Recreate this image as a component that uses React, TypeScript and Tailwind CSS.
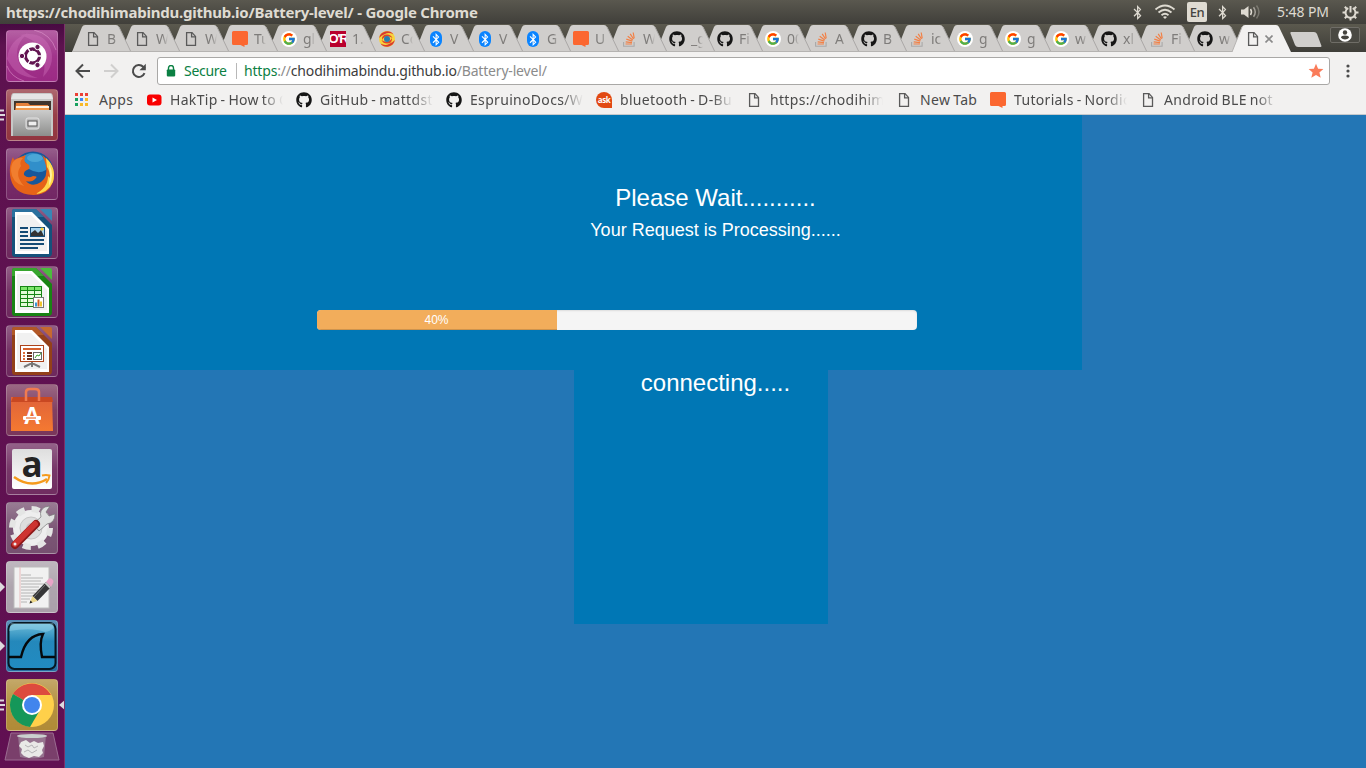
import React from "react";
import { FaGithub, FaBluetoothB } from "react-icons/fa";
import { FcGoogle } from "react-icons/fc";

type IconKind = "doc" | "nordic" | "google" | "oreilly" | "swirl" | "bt" | "so" | "github" | "youtube" | "ask" | "apps";

function SiteIcon({ kind }: { kind: IconKind }) {
  switch (kind) {
    case "doc":
      return (
        <svg width="16" height="16" viewBox="0 0 16 16" fill="none" stroke="#5a5a5a" strokeWidth="1.3">
          <path d="M3.600 1.600h5.400l3.500 3.800v8.900H3.600z" />
          <path d="M8.600 1.800v4h3.800" />
        </svg>
      );
    case "nordic":
      return (
        <svg width="16" height="16" viewBox="0 0 16 16">
          <path d="M1.500 0h13q1.500 0 1.500 1.500v11q0 1.500-1.500 1.500h-2v2L8.500 14h-7Q0 14 0 12.500v-11Q0 0 1.500 0z" fill="#fb6730" />
        </svg>
      );
    case "google":
      return (
        <span className="flex size-4 items-center justify-center rounded-full bg-white">
          <FcGoogle size={14} />
        </span>
      );
    case "oreilly":
      return (
        <span className="flex size-4 items-center justify-center overflow-hidden bg-[#b9002d] font-['Liberation_Sans'] text-[13px] leading-4 font-bold tracking-[-1.2px] whitespace-nowrap text-white">
          O'R
        </span>
      );
    case "swirl":
      return (
        <svg width="16" height="16" viewBox="0 0 16 16">
          <circle cx="8" cy="8" r="8" fill="#f8d43c" />
          <path d="M.2 7A8 8 0 0 1 14.500 3.500Q10 1 6 3 2 4.500 .2 7zM15.800 9A8 8 0 0 1 1.500 12.500Q6 15 10 13q4-1.500 5.800-4z" fill="#d93b30" />
          <path d="M3 9q-.5-5.500 5-5.500Q12 3.500 13.500 7 10 4.500 7 5.500T3 9zM13 7q.5 5.500-5 5.500Q4 12.500 2.500 9 6 11.500 9 10.500T13 7z" fill="#e0452d" />
          <circle cx="8" cy="8" r="3" fill="#297fb3" />
        </svg>
      );
    case "bt":
      return (
        <span className="ml-0.5 flex h-4 w-3 items-center justify-center rounded-[6px] bg-[#0a84ff] text-white">
          <FaBluetoothB size={13} />
        </span>
      );
    case "so":
      return (
        <svg width="16" height="16" viewBox="0 0 16 16" fill="none">
          <path d="M2.600 11v4.200h10.500V11" stroke="#a9a9a9" strokeWidth="1.100" />
          <path d="M4.500 13h6.400M4.700 10.800l6.300.8M5.300 8.100l6 2M6.700 5.300l5 3.700M9.200 2.900l3.300 5.100M12.200 1.500l1 5.800" stroke="#f28046" strokeWidth="1.200" />
        </svg>
      );
    case "github":
      return <FaGithub size={16} color="#161616" />;
    case "youtube":
      return (
        <svg width="16" height="16" viewBox="0 0 16 16">
          <rect x="1" y="2.500" width="14.500" height="11" rx="3" fill="#f90000" />
          <path d="M6.500 5.500v5L11 8z" fill="#fff" />
        </svg>
      );
    case "ask":
      return (
        <span className="flex size-4 items-center justify-center rounded-full rounded-br-none bg-[#e24912] font-['Open_Sans'] text-[8px] leading-none font-bold tracking-[-0.4px] text-white">
          ask
        </span>
      );
    default:
      return (
        <svg width="16" height="16" viewBox="0 0 16 16">
          {["#ec4035", "#ec4035", "#ec4035", "#18a05e", "#4286f5", "#f9b928", "#18a05e", "#f9b928", "#f9b928"].map((c, i) => (
            <rect key={i} x={(i % 3) * 5} y={1 + Math.floor(i / 3) * 5} width="3" height="3" fill={c} />
          ))}
        </svg>
      );
  }
}

const tabs: [IconKind, string][] = [
  ["doc", "B"], ["doc", "W"], ["doc", "W"], ["nordic", "Tu"], ["google", "gl"], ["oreilly", "1."],
  ["swirl", "Co"], ["bt", "V"], ["bt", "V"], ["bt", "G"], ["nordic", "U"], ["so", "W"],
  ["github", "_g"], ["github", "Fi"], ["google", "00"], ["so", "A"], ["github", "B"], ["so", "ic"],
  ["google", "g"], ["google", "g"], ["google", "w"], ["github", "xl"], ["so", "Fi"], ["github", "w"],
];

const bookmarks: { kind: IconKind; label: string; box: string; text: string }[] = [
  { kind: "apps", label: "Apps", box: "w-[71px]", text: "w-[40px]" },
  { kind: "youtube", label: "HakTip - How to C", box: "w-[150px]", text: "w-[113px] fade" },
  { kind: "github", label: "GitHub - mattdst", box: "w-[150px]", text: "w-[113px] fade" },
  { kind: "github", label: "EspruinoDocs/W", box: "w-[150px]", text: "w-[113px] fade" },
  { kind: "ask", label: "bluetooth - D-Bu", box: "w-[150px]", text: "w-[113px] fade" },
  { kind: "doc", label: "https://chodihim", box: "w-[150px]", text: "w-[113px] fade" },
  { kind: "doc", label: "New Tab", box: "w-[94px]", text: "w-[64px]" },
  { kind: "nordic", label: "Tutorials - Nordic", box: "w-[150px]", text: "w-[113px] fade" },
  { kind: "doc", label: "Android BLE not", box: "w-[150px]", text: "w-[113px] fade" },
];

function TopBar() {
  return (
    <header className="flex h-6 shrink-0 items-center justify-between bg-linear-to-b from-[#5a584f] to-[#403f3a] pr-[7px] pl-[6px] text-[#dfdbd2]">
      <h1 className="text-[15px] leading-6 font-bold tracking-[-0.23px] whitespace-pre">
        https://chodihimabindu.github.io/Battery-level/ - Google Chrome
      </h1>
      <div className="flex h-6 items-center">
        <FaBluetoothB size={15} className="mr-[9px]" />
        <svg width="22" height="16" viewBox="0 0 22 16" fill="none" stroke="currentColor" strokeWidth="1.800" className="mr-[11px]">
          <path d="M1.500 5.500Q11-2.500 20.500 5.500M4.500 8.500q6.500-5.600 13 0M7.500 11.300q3.500-3 7 0" />
          <path d="M9 13q2-1.600 4 0l-2 2z" fill="currentColor" stroke="none" />
        </svg>
        <span className="flex h-5 w-5 items-center justify-center rounded-[2px] bg-[#dfdbd2] text-[13px] leading-none font-medium tracking-[-0.5px] text-[#45443f]">En</span>
        <FaBluetoothB size={15} className="mr-[10px] ml-2" />
        <svg width="22" height="16" viewBox="0 0 22 16" fill="none" stroke="currentColor" strokeWidth="1.500">
          <path d="M1 5.500h3L8.500 2v12L4 10.500H1z" fill="currentColor" stroke="none" />
          <path d="M10.500 5q2 3 0 6" />
          <path d="M13.500 3.200q3.500 4.800 0 9.600" opacity=".6" />
          <path d="M16.500 1.500q5 6.500 0 13" opacity=".3" />
        </svg>
        <span className="ml-[15px] w-[53px] text-[14px] leading-6 tracking-[-0.1px] whitespace-nowrap">5:48 PM</span>
        <svg width="17" height="17" viewBox="0 0 17 17" fill="none" stroke="currentColor" className="ml-[12px]">
          <path d="M6.300 4.200a5 5 0 1 0 4.400 0" strokeWidth="2" />
          <path d="M8.500 2v6.500" strokeWidth="2" />
          <path d="M.5 8.500h3M13.500 8.500h3M8.500 13.500v3M2.800 2.800l2 2M14.200 2.800l-2 2M2.800 14.200l2-2M14.200 14.200l-2-2" strokeWidth="2" />
        </svg>
      </div>
    </header>
  );
}

function TabStrip() {
  return (
    <div className="flex h-7 shrink-0 bg-linear-to-b from-[#5b594e] to-[#3f3e39] pl-[7px]">
      {tabs.map(([kind, label], i) => (
        <div key={i} className={`relative flex h-7 shrink-0 items-center pt-[2px] pl-[13px] ${i < 8 ? "w-[49px]" : "w-12"}`} style={{ zIndex: 24 - i }}>
          <svg width="61" height="28" viewBox="0 0 61 28" className="absolute top-0 left-0">
            <path d="M0 28L10 3Q11 1 13 1H44Q46 1 47 3L59 28z" fill="#d0cecc" />
            <path d="M47 3L59 28" stroke="#aaa8a6" fill="none" />
            <path d="M0 27.500H60" stroke="#b5b3b1" />
          </svg>
          <span className="relative flex w-4 shrink-0"><SiteIcon kind={kind} /></span>
          <span className="fade-short relative ml-[6px] w-[12px] shrink-0 overflow-hidden text-[14px] leading-6 whitespace-nowrap text-[#7e7c7a]">{label}</span>
        </div>
      ))}
      <div className="relative z-30 flex h-7 w-[56px] shrink-0 items-center pt-[2px] pl-[13px]">
        <svg width="64" height="28" viewBox="0 0 64 28" className="absolute top-0 left-0">
          <path d="M0 28L10 3Q11 1 13 1H44Q46 1 47 3L59 28z" fill="#f2f1f0" />
          <path d="M0 28L10 3" stroke="#b5b3b1" />
        </svg>
        <span className="relative flex w-4 shrink-0"><SiteIcon kind="doc" /></span>
        <svg width="8" height="8" viewBox="0 0 8 8" className="relative ml-[4px]" stroke="#8a8a8a" strokeWidth="1.600">
          <path d="M.5.5l7 7M7.500.5l-7 7" />
        </svg>
      </div>
      <svg width="36" height="28" viewBox="0 0 36 28" className="ml-px shrink-0">
        <path d="M2 8H25q2 0 3 2l4.500 12q0 1-1 1H9q-2 0-3-2L1.500 9.500Q1 8 2 8z" fill="#d0cecc" />
      </svg>
      <div className="mt-[3px] ml-[5px] flex h-4 w-[30px] shrink-0 items-center justify-center rounded-[2px] border border-[#6f6d67] bg-[#4a4943]">
        <svg width="14" height="14" viewBox="0 0 14 14">
          <circle cx="7" cy="7" r="6.800" fill="#fff" />
          <circle cx="7" cy="4.500" r="2.200" fill="#45443f" />
          <path d="M3 9.800Q3 7.500 7 7.500t4 2.300q-1.500 1.800-4 1.800T3 9.800z" fill="#45443f" />
        </svg>
      </div>
    </div>
  );
}

function Toolbar() {
  return (
    <div className="flex h-[37px] shrink-0 items-center bg-[#f2f1f0] pl-[10px]">
      <svg width="16" height="16" viewBox="0 0 16 16" fill="none" stroke="#4b4b4b" strokeWidth="2">
        <path d="M15 8H2M8 1.500L1.500 8 8 14.500" />
      </svg>
      <svg width="16" height="16" viewBox="0 0 16 16" fill="none" stroke="#d0cfce" strokeWidth="2" className="ml-3">
        <path d="M1 8h13M8 1.500L14.500 8 8 14.500" />
      </svg>
      <svg width="16" height="16" viewBox="0 0 16 16" className="ml-3">
        <path d="M13.500 10.200A6 6 0 1 1 12.200 3.800L14 5.500" fill="none" stroke="#4b4b4b" strokeWidth="2" />
        <path d="M14.800.8v6.400H8.500z" fill="#4b4b4b" />
      </svg>
      <div className="ml-[10px] flex h-7 w-[1173px] items-center rounded-[3px] border border-[#a9a8a6] bg-white pr-[5px] pl-[8px] text-[14px] leading-6">
        <svg width="10" height="12" viewBox="0 0 10 12">
          <path d="M2.500 5V3a2.500 2.500 0 0 1 5 0v2" fill="none" stroke="#0b8043" strokeWidth="1.400" />
          <rect x=".8" y="4.400" width="8.400" height="7" rx=".8" fill="#0b8043" />
        </svg>
        <span className="ml-[8px] w-[43px] tracking-[-0.3px] whitespace-nowrap text-[#0b8043]">Secure</span>
        <span className="ml-[9px] h-4 w-px bg-[#b8b8b8]" />
        <span className="ml-[7px] grow tracking-[-0.18px] whitespace-nowrap text-[#8b8b8b]">
          <span className="text-[#0b8043]">https</span>://<span className="text-[#3c3c3c]">chodihimabindu.github.io</span>/Battery-level/
        </span>
        <svg width="16" height="16" viewBox="0 0 16 16" fill="#fa7c5a">
          <path d="M8 .8l2.100 4.900 5.300.4-4 3.500 1.300 5.200L8 12l-4.700 2.800 1.300-5.200-4-3.500 5.300-.4z" />
        </svg>
      </div>
      <svg width="4" height="14" viewBox="0 0 4 14" fill="#4b4b4b" className="ml-[16px]">
        <circle cx="2" cy="2" r="1.600" /><circle cx="2" cy="7" r="1.600" /><circle cx="2" cy="12" r="1.600" />
      </svg>
    </div>
  );
}

function BookmarkBar() {
  return (
    <div className="flex h-[26px] shrink-0 items-center border-b border-[#c5c9cc] bg-[#f2f1f0] pb-[4px] pl-[10px] text-[14px] leading-[21px] text-[#4b4b4b]">
      {bookmarks.map((b, i) => (
        <div key={i} className={`flex shrink-0 items-center gap-2 ${b.box}`}>
          <span className="flex w-4 shrink-0"><SiteIcon kind={b.kind} /></span>
          <span className={`overflow-hidden tracking-[0.32px] [word-spacing:-1px] whitespace-nowrap ${b.text}`}>{b.label}</span>
        </div>
      ))}
    </div>
  );
}

function OfficeDoc({ dark, light, children }: { dark: string; light: string; children: React.ReactNode }) {
  return (
    <g>
      <path d="M8 2h22l16 16v28q0 4-4 4H9q-3 0-3-3V5q0-3 2-3z" fill={dark} />
      <path d="M8 2h22l8 8H6V5q0-3 2-3z" fill={light} opacity=".6" />
      <path d="M9 5h17l17 17v25H9z" fill="#fff" />
      <path d="M11 8h14l16 16v20H11z" fill="#ececec" opacity=".75" />
      <path d="M34 2h10q2 0 2 2v10z" fill={light} />
      {children}
    </g>
  );
}

const launcherArt: { name: string; tile: string; mark: number; art: React.ReactNode }[] = [
  {
    name: "Dash", tile: "bg-[#9c2a85]", mark: 0,
    art: (
      <g>
        <path d="M1 29Q3 10 22 3 8 15 12 29q4 15 20 19Q12 48 4 34M14 5Q38 0 45 20q4 15-8 27 4-17-2-29Q28 9 14 5" fill="#d77cc2" opacity=".35" />
        <path d="M28 0q17 4 22 20M18 51Q5 47 1 36" fill="none" stroke="#e7a2d6" opacity=".5" />
        <circle cx="26.500" cy="26.500" r="14" fill="#fff" />
        <circle cx="26.500" cy="26" r="7" fill="none" stroke="#631552" strokeWidth="3.300" />
        <path d="M26.500 26L35 26M26.500 26L22 18M26.500 26L22 34" stroke="#fff" strokeWidth="1.400" />
        <circle cx="26.500" cy="26" r="5.200" fill="#fff" />
        <g fill="#631552" stroke="#fff"><circle cx="16" cy="26" r="2.700" /><circle cx="31.500" cy="17" r="2.700" /><circle cx="31.500" cy="35" r="2.700" /></g>
      </g>
    ),
  },
  {
    name: "Files", tile: "bg-[#92353f]", mark: 3,
    art: (
      <g>
        <path d="M8 4h36q3 0 3 5v38H5V9q0-5 3-5z" fill="#c7c8c7" />
        <path d="M7 5h38l2 5H5z" fill="#e5e5e5" />
        <path d="M8 12h37v10H8z" fill="#40352d" />
        <path d="M10 14h12l2 2h18v6H9z" fill="#e5803a" />
        <path d="M10 17h33v2H10z" fill="#fff2df" /><path d="M10 19h33v3H10z" fill="#f39a4c" />
        <path d="M7 21h38v26H7z" fill="url(#metal)" />
        <rect x="20" y="29" width="13" height="11" rx="2" fill="#bcbcbc" stroke="#e3e3e3" />
        <rect x="22" y="32" width="9" height="5" fill="#eee" stroke="#555" />
      </g>
    ),
  },
  {
    name: "Firefox", tile: "bg-[#722664]", mark: 0,
    art: (
      <g>
        <circle cx="27" cy="24" r="20.500" fill="#17579b" />
        <path d="M15 10Q24 2 35 7q7 7 5 15-8 5-17-1-1-6-6-8z" fill="#318fca" />
        <ellipse cx="29" cy="10" rx="8" ry="4" fill="#7bd0ee" opacity=".35" />
        <path d="M7 9l1 3q5-3 12-5-3 5 0 8 5 2 3 6-6 2-5 6 4 4 9 1 5 0 3 2-4 5-10 3 6 7 15 1 7-5 5-16-2-8-4-11 12 8 12 21-2 19-21 19Q6 46 4 27 3 17 7 9z" fill="#e66318" />
        <path d="M7 14q5-5 10-4-4 4-2 8-7 9 3 20Q6 35 5 23q0-6 2-9z" fill="#f58a39" opacity=".7" />
        <path d="M40 10q11 10 7 24-5 11-18 12 13-6 13-18l2 2q0-7-3-11z" fill="#ffd64a" />
        <path d="M43 16q6 11 0 22 0-6 1-10z" fill="#fff1a0" />
      </g>
    ),
  },
  {
    name: "Writer", tile: "bg-[#6d285d]", mark: 0,
    art: (
      <OfficeDoc dark="#15517b" light="#3886b5">
        <path d="M14 21h8M14 25h8M14 29h8M14 33h24M14 37h24M14 41h18" stroke="#144b75" strokeWidth="2" />
        <rect x="24.500" y="20.500" width="14" height="9" fill="#a9d5ef" stroke="#174e77" /><path d="M25 29v-3l4-3 3 3 3-3 3 6z" fill="#333" /><circle cx="36" cy="22" r="1.500" fill="#ffcf34" />
      </OfficeDoc>
    ),
  },
  {
    name: "Calc", tile: "bg-[#6d285d]", mark: 0,
    art: (
      <OfficeDoc dark="#198314" light="#4bbc3d">
        <path d="M14 20h22v21H14z" fill="#168514" />
        {[0, 1, 2, 3, 4].flatMap((r) => [0, 1, 2].map((c) => <rect key={`${r}-${c}`} x={15 + c * 7} y={21 + r * 4} width="6" height="3" fill={r === 0 ? "#7ee66a" : "#e3fbd8"} />))}
        <rect x="27.500" y="31.500" width="10" height="10" fill="#fff" stroke="#777" /><path d="M29 40.500v-4h2v4z" fill="#3a97d4" /><path d="M31.500 40.500v-7h2v7z" fill="#d45a1a" /><path d="M34 40.500v-5h2v5z" fill="#f0c52c" />
      </OfficeDoc>
    ),
  },
  {
    name: "Impress", tile: "bg-[#6d285d]", mark: 0,
    art: (
      <OfficeDoc dark="#934019" light="#c66930">
        <path d="M18 42l8-4 8 4M26 37v5" stroke="#777" strokeWidth="2" fill="none" />
        <rect x="14.500" y="20.500" width="23" height="16" fill="#fff" stroke="#ac431b" /><path d="M17 24h18" stroke="#d5602d" strokeWidth="2" />
        <path d="M17 28h2M17 31h2M17 34h2" stroke="#dc6c39" strokeWidth="2" /><path d="M21 28h5M21 31h5M21 34h5" stroke="#6e301b" strokeWidth="2" />
        <rect x="27.500" y="27.500" width="8" height="7" fill="#fff" stroke="#666" /><path d="M29 33l2-3 2 1 2-3" stroke="#39a22c" fill="none" />
      </OfficeDoc>
    ),
  },
  {
    name: "Software", tile: "bg-[#79365b]", mark: 0,
    art: (
      <g>
        <path d="M5 13h41l1 34H5z" fill="url(#bag)" />
        <path d="M7 13h39l1 5H5z" fill="#c94822" />
        <path d="M20 17V8q0-3 4-3h5q4 0 4 3v9" fill="none" stroke="#f17b50" strokeWidth="2.500" />
        <text x="26" y="40" textAnchor="middle" fontFamily="Liberation Sans, sans-serif" fontSize="23" fontWeight="700" fill="#fff">A</text>
        <rect x="17" y="32" width="18" height="4" rx="1" fill="#fff" /><path d="M20 34h10" stroke="#ed7138" strokeWidth="1.200" />
      </g>
    ),
  },
  {
    name: "Amazon", tile: "bg-[#702d61]", mark: 0,
    art: (
      <g>
        <rect x="6" y="6" width="40" height="40" rx="2" fill="url(#paper)" />
        <text x="26" y="34" textAnchor="middle" fontFamily="Open Sans, sans-serif" fontSize="35" fontWeight="700" fill="#242424">a</text>
        <path d="M8 34q17 12 33 2" fill="none" stroke="#f59a1c" strokeWidth="2.500" /><path d="M36 32.500q4-1 7.500 0-.5 4.500-3.500 7.500" fill="none" stroke="#f59a1c" strokeWidth="2" />
      </g>
    ),
  },
  {
    name: "Settings", tile: "bg-[#765070]", mark: 0,
    art: (
      <g>
        <circle cx="25" cy="26" r="18" fill="#eee" /><circle cx="25" cy="26" r="19" fill="none" stroke="#e4e5e4" strokeWidth="6" strokeDasharray="8 6.920" />
        <circle cx="25" cy="26" r="11" fill="#ddd" stroke="#c6c6c6" /><circle cx="25" cy="26" r="5" fill="#c9c4c8" />
        <path d="M27 22l8-7q-2-7 4-10l5-1-4 6 3 4 6-2q0 9-8 10l-8 7z" fill="#dfe1e0" stroke="#777" strokeWidth=".7" />
        <path d="M9 43L30 22" stroke="#8e1919" strokeWidth="8" strokeLinecap="round" /><path d="M9 42L29 22" stroke="#ce3431" strokeWidth="6" strokeLinecap="round" /><circle cx="9" cy="42" r="1.500" fill="#eee" />
      </g>
    ),
  },
  {
    name: "Text editor", tile: "bg-[#aaa0aa]", mark: 1,
    art: (
      <g>
        <rect x="8" y="6" width="35" height="41" fill="#f1f1f1" stroke="#bcbcbc" /><path d="M14 6v41" stroke="#e9bcbc" />
        <path d="M15 14h10M15 17h22M15 20h20M15 23h23M15 26h18M15 29h21M15 32h14M15 35h13M15 38h9M15 41h6" stroke="#b4b4b4" />
        <path d="M26.500 35L40 21l5 5-13.500 14z" fill="#353637" /><path d="M40 21l3-3.500q3.500-1 4.500 3.500L45 26z" fill="#e9a5c8" /><path d="M38.500 22.500l1.500-1.500 5 5-1.500 1.500z" fill="#c9c9c9" /><path d="M26.500 35l5 5-8 2.500z" fill="#ead68b" /><path d="M23.500 42.500l1-3 2 2z" fill="#222" /><path d="M28 36l11-12" stroke="#777" />
      </g>
    ),
  },
  {
    name: "Wireshark", tile: "bg-[#276ba0]", mark: 1,
    art: (
      <g>
        <rect x="2.500" y="3" width="47" height="46" rx="6" fill="url(#sea)" stroke="#061722" strokeWidth="2" />
        <path d="M3 37h12Q20 15 37 14q-4 8-1 23h13" fill="none" stroke="#05090c" strokeWidth="2.400" />
        <path d="M5 3h42q3 7-8 9Q26 7 3 11z" fill="#b1e5f5" opacity=".35" />
      </g>
    ),
  },
  {
    name: "Chrome", tile: "bg-[#b08b37]", mark: 3,
    art: (
      <g>
        <circle cx="26" cy="26" r="22" fill="#ffd04a" />
        <path d="M26 26L7 15A22 22 0 0 1 45 16H26z" fill="#dd4b3e" />
        <path d="M26 26L7 15a22 22 0 0 0 17 33l10-17z" fill="#159759" />
        <path d="M26 16h19L35 31z" fill="#ffd04a" /><circle cx="26" cy="26" r="10" fill="#fff" /><circle cx="26" cy="26" r="8" fill="#4285ed" />
      </g>
    ),
  },
];

function Launcher() {
  return (
    <nav className="flex w-[65px] shrink-0 flex-col items-center gap-[7px] overflow-hidden border-r border-[#7b3169] bg-linear-to-b from-[#480a42] via-[#5d124f] via-[3%] to-[#611052] pt-[6px]">
      {launcherArt.map((item) => (
        <div key={item.name} className={`relative size-[52px] shrink-0 rounded-[4px] border border-white/20 bg-linear-to-b from-white/25 via-white/5 to-transparent ${item.tile}`}>
          <svg width="52" height="52" viewBox="0 0 52 52" className="absolute -top-px -left-px">{item.art}</svg>
          {item.mark === 1 && <svg className="absolute top-[20px] -left-[7px]" width="5" height="10"><path d="M0 0l5 5-5 5z" fill="#dedade" /></svg>}
          {item.mark === 3 && <svg className="absolute top-[19px] -left-[7px]" width="5" height="12"><path d="M0 1.500h4M0 6h5M0 10.500h4" stroke="#dedade" strokeWidth="2" /></svg>}
          {item.name === "Chrome" && <svg className="absolute top-[20px] left-[52px]" width="6" height="10"><path d="M6 0L0 5l6 5z" fill="#dedade" /></svg>}
        </div>
      ))}
      <svg width="58" height="32" viewBox="0 0 58 32" className="-mt-[6px] shrink-0">
        <path d="M8 1h42l6 27H2z" fill="#7a3f6b" stroke="#9b6b91" />
        <path d="M15 3h28l-2 22q-11 3-24 0z" fill="#b2a9b3" opacity=".5" />
        <ellipse cx="29" cy="4" rx="15" ry="2" fill="#cbd0cf" />
        <path d="M18 10l5-2 4 3 4-2 4 2 5-1 1 4-2 4 1 3-4 4-5-1-5 2-5-2-3-3 1-4-3-3z" fill="#e9e9e7" />
        <path d="M22 13l3 2 4-2 2 3 4-2M21 20l4-2 4 3 5-3" fill="none" stroke="#b5b4b6" />
      </svg>
    </nav>
  );
}

export default function App() {
  return (
    <div className="flex h-[768px] w-[1366px] flex-col overflow-hidden font-['Noto_Sans',sans-serif]">
      <style>{`.fade{mask-image:linear-gradient(to right,#000 82%,transparent)}.fade-short{mask-image:linear-gradient(to right,#000 55%,transparent)}`}</style>
      <svg width="0" height="0" className="absolute">
        <defs>
          <linearGradient id="metal" x2="0" y2="1"><stop stopColor="#ccc" /><stop offset="1" stopColor="#8d8e8c" /></linearGradient>
          <linearGradient id="bag" x2="0" y2="1"><stop stopColor="#e0633a" /><stop offset="1" stopColor="#f47931" /></linearGradient>
          <linearGradient id="paper" x2="0" y2="1"><stop stopColor="#dedede" /><stop offset="1" stopColor="#fff" /></linearGradient>
          <linearGradient id="sea" x2="0" y2="1"><stop stopColor="#70bdd9" /><stop offset=".4" stopColor="#2488bb" /><stop offset="1" stopColor="#218bc2" /></linearGradient>
        </defs>
      </svg>
      <TopBar />
      <div className="flex min-h-0 grow">
        <Launcher />
        <div className="flex min-w-0 grow flex-col">
          <TabStrip />
          <Toolbar />
          <BookmarkBar />
          <main className="grow bg-[#2376b5] font-['Liberation_Sans',sans-serif] text-white">
            <section className="h-[255px] w-[1017px] bg-[#0077b5] pt-[69px]">
              <div className="ml-[284px] w-[733px] text-center">
                <h2 className="text-[24px] leading-[27px]">Please Wait...........</h2>
                <h3 className="mt-[9px] text-[18px] leading-5">Your Request is Processing......</h3>
              </div>
              <div className="mt-[70px] ml-[252px] flex h-5 w-[600px] overflow-hidden rounded-[4px] bg-[#f5f5f5] shadow-[inset_0_1px_2px_rgba(0,0,0,0.1)]">
                <div className="h-5 bg-[#f2ad5b] pr-px text-center text-[12px] leading-5 shadow-[inset_0_-1px_0_rgba(0,0,0,0.15)]" style={{ width: "40%" }}>40%</div>
              </div>
            </section>
            <section className="ml-[509px] h-[254px] w-[254px] bg-[#0077b5] pl-[29px]">
              <p className="w-[225px] text-center text-[24px] leading-[26px]">connecting.....</p>
            </section>
          </main>
        </div>
      </div>
    </div>
  );
}
